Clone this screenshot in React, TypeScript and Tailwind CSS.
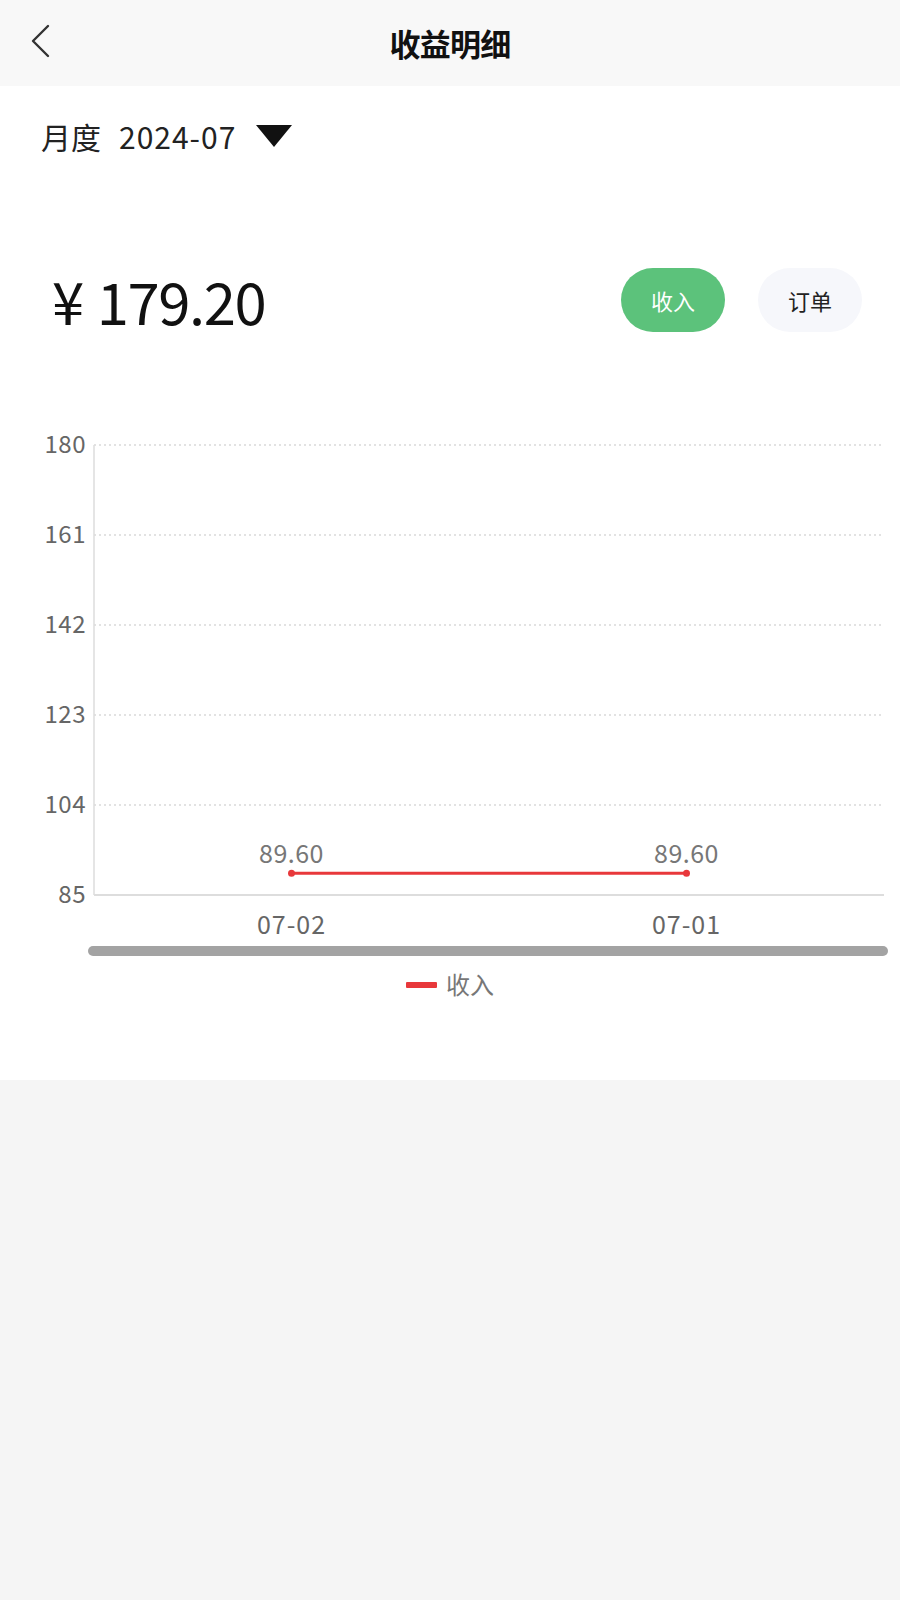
import React from 'react'

const cjk = '"Noto Sans CJK SC", "Noto Sans", sans-serif'

const BackIcon = () => (
  <svg width="24" height="34" viewBox="0 0 24 34" fill="none">
    <path d="M20 2 L5 17 L20 32" stroke="#333" strokeWidth="2.4" strokeLinecap="round" strokeLinejoin="round" />
  </svg>
)

// Сетка графика: 85 .. 180, шаг 19
const yTicks = [180, 161, 142, 123, 104, 85]
const top = 26
const bottom = 476
const left = 94
const right = 884

const yFor = (v: number) => bottom - ((v - 85) / (180 - 85)) * (bottom - top)

const points = [
  { label: '07-02', value: 89.6 },
  { label: '07-01', value: 89.6 },
]

const IncomeChart = () => {
  const step = (right - left) / points.length
  const xs = points.map((_, i) => left + step * (i + 0.5))

  return (
    <svg width="900" height="590" viewBox="0 0 900 590" className="block">
      {yTicks.map((t) => (
        <g key={t}>
          {t !== 85 && (
            <line x1={left} x2={right} y1={yFor(t)} y2={yFor(t)} stroke="#d9d9d9" strokeWidth="1.5" strokeDasharray="2 3" />
          )}
          <text x={86} y={yFor(t) + 8} textAnchor="end" fontSize="24" letterSpacing="0.5" fill="#666" fontFamily={cjk}>
            {t}
          </text>
        </g>
      ))}
      <line x1={left} x2={left} y1={top} y2={bottom} stroke="#ddd" strokeWidth="1.5" />
      <line x1={left} x2={right} y1={bottom} y2={bottom} stroke="#ddd" strokeWidth="2" />

      <line x1={xs[0]} x2={xs[1]} y1={yFor(89.6)} y2={yFor(89.6)} stroke="#e8383b" strokeWidth="3" />
      {points.map((p, i) => (
        <g key={p.label}>
          <circle cx={xs[i]} cy={yFor(p.value)} r="3.5" fill="#e8383b" />
          <text x={xs[i]} y={yFor(p.value) - 10} textAnchor="middle" fontSize="25" letterSpacing="0.5" fill="#777" fontFamily={cjk}>
            {p.value.toFixed(2)}
          </text>
          <text x={xs[i]} y={bottom + 39} textAnchor="middle" fontSize="25" letterSpacing="1" fill="#666" fontFamily={cjk}>
            {p.label}
          </text>
        </g>
      ))}

      {/* скроллбар dataZoom */}
      <rect x="88" y="527" width="800" height="10" rx="5" fill="#a3a3a3" />

      {/* легенда */}
      <rect x="406" y="563" width="31" height="6" rx="1" fill="#e8383b" />
      <text x="446" y="575" fontSize="24" fill="#777" fontFamily={cjk}>
        收入
      </text>
    </svg>
  )
}

export default function App() {
  return (
    <div className="min-h-[1600px] bg-[#f5f5f5]" style={{ fontFamily: cjk }}>
      <header className="h-[86px] bg-[#f8f8f8] grid grid-cols-[1fr_auto_1fr] items-center">
        <div className="pl-[28px] pb-[4px]">
          <BackIcon />
        </div>
        <h1 className="text-[31px] font-bold text-[#111] tracking-tight">收益明细</h1>
        <div />
      </header>

      <main className="bg-white h-[994px]">
        <div className="flex items-center pl-[41px] pt-[28px] h-[72px] text-[30px] text-[#222]">
          <span>月度</span>
          <span className="ml-[18px] tracking-[1px]">2024-07</span>
          <svg className="ml-[20px]" width="36" height="22" viewBox="0 0 36 22">
            <polygon points="0,0 36,0 18,22" fill="#111" />
          </svg>
        </div>

        <div className="flex items-center justify-between pl-[52px] pr-[38px] mt-[110px]">
          <div className="text-[58px] text-[#111] leading-none tracking-tight">
            <span className="mr-[14px]">¥</span>179.20
          </div>
          <div className="flex items-center gap-[33px]">
            <button className="w-[104px] h-[64px] rounded-full bg-[#5cc27b] text-white text-[22px]">收入</button>
            <button className="w-[104px] h-[64px] rounded-full bg-[#f6f7fb] text-[#222] text-[22px]">订单</button>
          </div>
        </div>

        <div className="mt-[87px]">
          <IncomeChart />
        </div>
      </main>
    </div>
  )
}
